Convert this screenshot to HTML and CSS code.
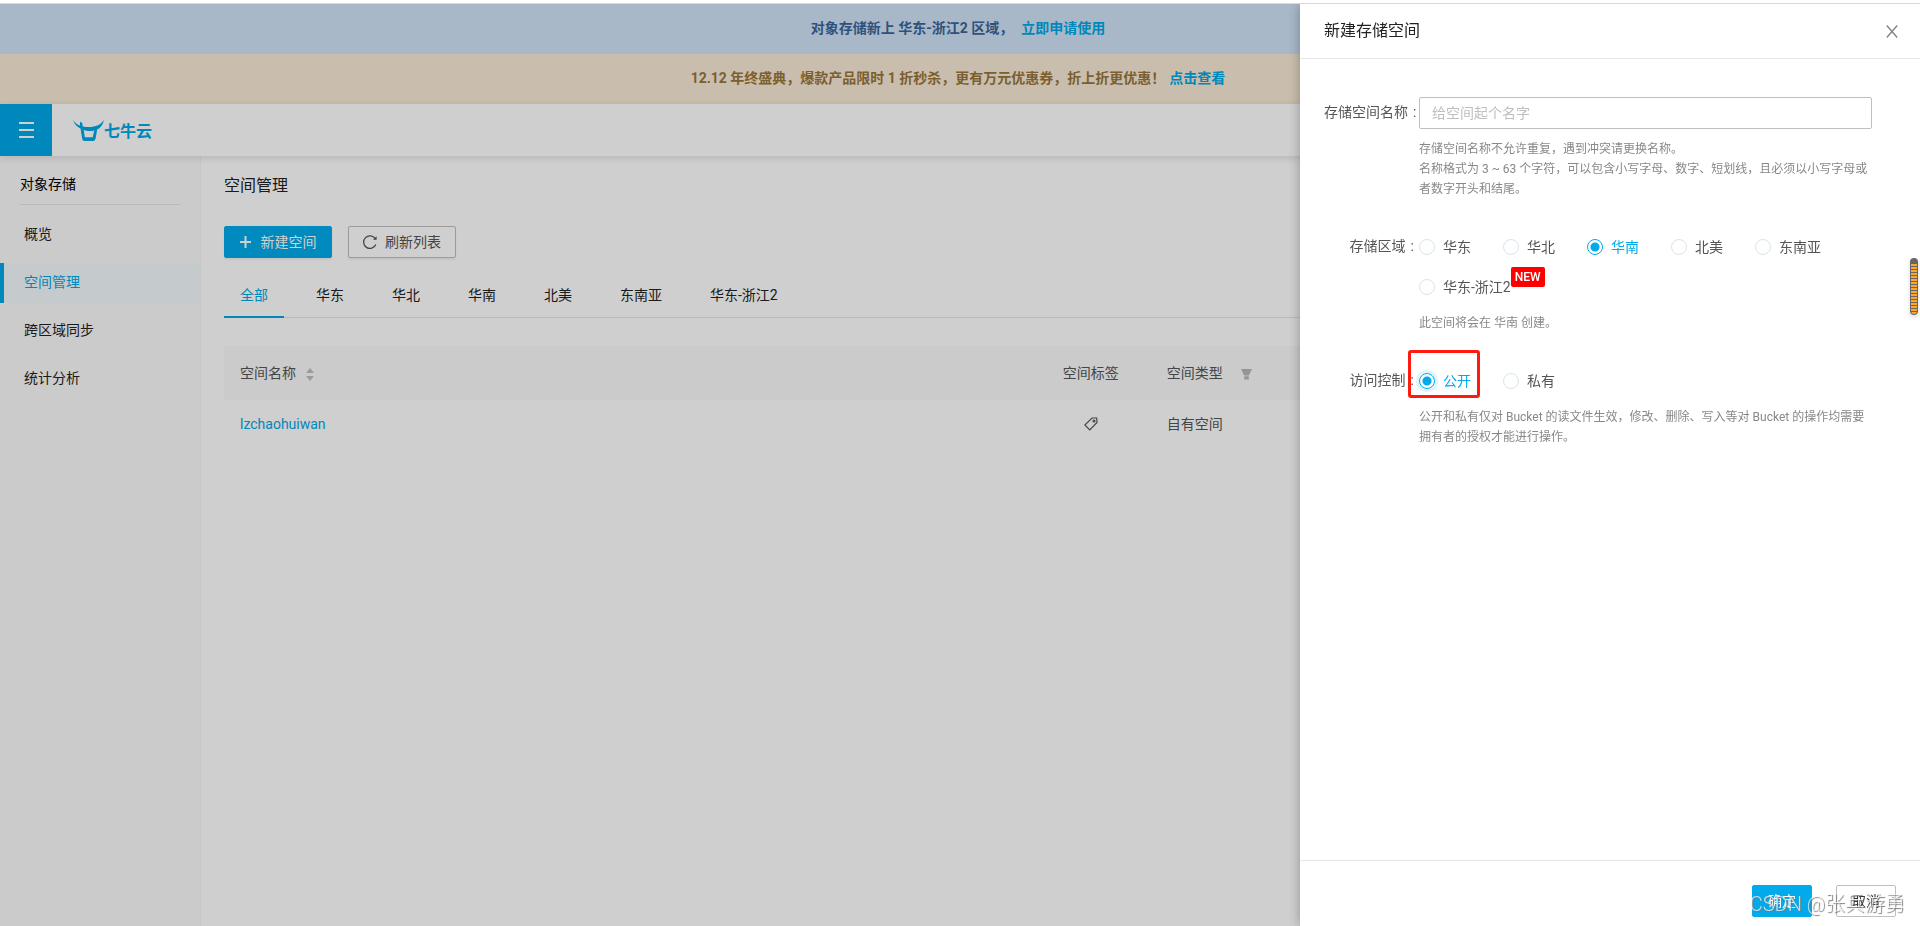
FILE: index.html
```html
<!DOCTYPE html>
<html lang="zh-CN">
<head>
<meta charset="utf-8">
<title>对象存储 - 空间管理</title>
<link rel="stylesheet" href="styles.css">
</head>
<body>
<div class="app">
  <div class="notice notice-info">
    <span>对象存储新上 华东-浙江2 区域，</span>
    <a href="#">立即申请使用</a>
  </div>
  <div class="notice notice-promo">
    <span>12.12 年终盛典，爆款产品限时 1 折秒杀，更有万元优惠券，折上折更优惠！</span>
    <a href="#">点击查看</a>
  </div>
  <header class="header">
    <button class="menu-button" type="button" aria-label="菜单">
      <svg width="15" height="16" viewBox="0 0 15 16"><path d="M0 1h15M0 8h15M0 15h15" stroke="#fff" stroke-width="2"/></svg>
    </button>
    <a class="logo" href="#">
      <svg width="31" height="21" viewBox="0 0 31 21" fill="#00a8e6">
        <path d="M0 0C3 4.500 8 7 15.500 7S28 4.500 31 0C29.500 6 26 10.200 19.500 11C13 11.700 3 9 0 0Z"/>
        <path d="M7 1.500L9.500 3.500V8L7 7Z"/>
        <path d="M7.500 8.500L10.800 10L11.800 17.300H19.800L21.200 10.500L24.200 9.500L22.600 18.500Q22 21 20 21H11.500Q9.500 21 9.100 18.500Z"/>
      </svg>
      <span class="logo-text">七牛云</span>
    </a>
  </header>
  <div class="body">
    <nav class="sidebar">
      <h2 class="sidebar-title">对象存储</h2>
      <a class="nav-item" href="#">概览</a>
      <a class="nav-item active" href="#">空间管理</a>
      <a class="nav-item" href="#">跨区域同步</a>
      <a class="nav-item" href="#">统计分析</a>
    </nav>
    <main class="main">
      <h1 class="page-title">空间管理</h1>
      <div class="toolbar">
        <button class="btn btn-primary" type="button">
          <svg width="11" height="12" viewBox="0 0 11 12"><path d="M5.500 0v12M0 6h11" stroke="currentColor" stroke-width="2"/></svg>
          新建空间
        </button>
        <button class="btn btn-tool" type="button">
          <svg width="14" height="14" viewBox="0 0 14 14" fill="none" stroke="currentColor"><path d="M12.300 3.800A6.300 6.300 0 1 0 12.800 9.500" stroke-width="1.300"/><path d="M13.600 1.200v3.600h-3.600z" fill="currentColor" stroke="none"/></svg>
          刷新列表
        </button>
      </div>
      <div class="tabs" role="tablist">
        <button class="tab selected" type="button" role="tab">全部</button>
        <button class="tab" type="button" role="tab">华东</button>
        <button class="tab" type="button" role="tab">华北</button>
        <button class="tab" type="button" role="tab">华南</button>
        <button class="tab" type="button" role="tab">北美</button>
        <button class="tab" type="button" role="tab">东南亚</button>
        <button class="tab" type="button" role="tab">华东-浙江2</button>
      </div>
      <table class="table">
        <thead>
          <tr>
            <th>空间名称<svg class="sort" width="8" height="13" viewBox="0 0 8 13" fill="#bfbfbf"><path d="M4 0l4 5H0zM4 13l4-5H0z"/></svg></th>
            <th class="col-tag">空间标签</th>
            <th class="col-type">空间类型<svg class="filter" width="11" height="11" viewBox="0 0 11 11" fill="#b8b8b8"><path d="M0 0h11L7.800 6.500H3.200zM3.200 7.200h4.600V10.500H3.200z"/></svg></th>
            <td class="col-rest"></td>
          </tr>
        </thead>
        <tbody>
          <tr>
            <td><a href="#">lzchaohuiwan</a></td>
            <td class="col-tag"><button class="tag-button" type="button" aria-label="标签"><svg width="14" height="14" viewBox="0 0 14 14" fill="none" stroke="currentColor" stroke-width="1.200"><path d="M8 1h4.700l.3 4.500L5.800 13 .8 8z"/><circle cx="10" cy="4" r="1"/></svg></button></td>
            <td>自有空间</td>
            <td></td>
          </tr>
        </tbody>
      </table>
    </main>
  </div>
</div>
<div class="mask"></div>
<aside class="drawer">
  <header class="drawer-header">
    <h2 class="drawer-title">新建存储空间</h2>
    <button class="close" type="button" aria-label="关闭"><svg width="12" height="13" viewBox="0 0 12 13"><path d="M.8.500l10.400 12M11.200.500L.8 12.500" stroke="#888" stroke-width="1.500"/></svg></button>
  </header>
  <form class="form">
    <div class="field">
      <label class="label" for="name">存储空间名称<span class="colon">:</span></label>
      <div class="control">
        <input class="input" id="name" type="text" placeholder="给空间起个名字">
        <p class="hint">存储空间名称不允许重复，遇到冲突请更换名称。<br>名称格式为 3 ~ 63 个字符，可以包含小写字母、数字、短划线，且必须以小写字母或者数字开头和结尾。</p>
      </div>
    </div>
    <div class="field" role="radiogroup" aria-labelledby="region-label">
      <span class="label" id="region-label">存储区域<span class="colon">:</span></span>
      <div class="control">
        <div class="radios">
          <label class="radio"><input type="radio" name="region">华东</label>
          <label class="radio"><input type="radio" name="region">华北</label>
          <label class="radio"><input type="radio" name="region" checked>华南</label>
          <label class="radio"><input type="radio" name="region">北美</label>
          <label class="radio"><input type="radio" name="region">东南亚</label>
          <label class="radio"><input type="radio" name="region"><span class="with-badge">华东-浙江2<span class="badge">NEW</span></span></label>
        </div>
        <p class="hint">此空间将会在 华南 创建。</p>
      </div>
    </div>
    <div class="field" role="radiogroup" aria-labelledby="access-label">
      <span class="label" id="access-label">访问控制<span class="colon">:</span></span>
      <div class="control">
        <div class="radios">
          <label class="radio marked focused"><input type="radio" name="access" checked>公开</label>
          <label class="radio"><input type="radio" name="access">私有</label>
        </div>
        <p class="hint">公开和私有仅对 Bucket 的读文件生效，修改、删除、写入等对 Bucket 的操作均需要拥有者的授权才能进行操作。</p>
      </div>
    </div>
  </form>
  <footer class="drawer-footer">
    <button class="btn btn-primary" type="button">确定</button>
    <button class="btn" type="button">取消</button>
  </footer>
</aside>
<div class="scroll-widget"></div>
<div class="watermark">CSDN @张兵游勇</div>
</body>
</html>
```
FILE: styles.css
```css
* { box-sizing: border-box; }

body {
  margin: 0;
  height: 100vh;
  overflow: hidden;
  background: #fff;
  color: #333;
  font: 14px/20px Roboto, "Noto Sans CJK SC", sans-serif;
}

h1, h2, p { margin: 0; font-weight: 400; }
a { color: #00a8e6; text-decoration: none; }
button, input { font: inherit; color: inherit; }
button { padding: 0; border: 0; background: none; }

.app {
  display: flex;
  flex-direction: column;
  height: 100vh;
  padding-top: 4px;
}

.notice {
  display: flex;
  justify-content: center;
  align-items: center;
  height: 50px;
  padding: 0 4px 2px 0;
  font-weight: 700;
}
.notice-info { gap: 8px; background: #cfe3f7; color: #3a6599; }
.notice-promo { gap: 4px; background: #f8ebd5; color: #98753a; }

.header {
  position: relative;
  display: flex;
  align-items: center;
  height: 52px;
  background: #fff;
  box-shadow: 0 2px 8px rgba(0, 0, 0, .12);
}
.menu-button {
  display: flex;
  align-items: center;
  justify-content: center;
  width: 52px;
  height: 52px;
  background: #00a8e9;
}
.logo {
  display: flex;
  align-items: center;
  margin-left: 21px;
  font-size: 16px;
  font-weight: 700;
}
.logo-text { padding-top: 4px; }

.body { display: flex; flex: 1; }
.sidebar {
  width: 201px;
  padding-top: 12px;
  background: #fafafa;
  border-right: 1px solid #f5f5f5;
}
.sidebar-title {
  margin: 0 20px 10px;
  padding: 6px 0 10px;
  border-bottom: 1px solid #e6e6e6;
  color: #000;
  font-size: 14px;
  line-height: 20px;
}
.nav-item {
  display: block;
  margin-bottom: 8px;
  padding: 9px 24px 11px;
  color: #222;
}
.nav-item.active {
  padding-left: 20px;
  border-left: 4px solid #00a8e9;
  background: #f3f9fd;
  color: #00a8e6;
}

.main { flex: 1; padding: 18px 24px 0 23px; }
.page-title { color: #222; font-size: 16px; line-height: 24px; }
.toolbar { display: flex; gap: 16px; margin-top: 28px; }

.btn {
  display: flex;
  align-items: center;
  justify-content: center;
  gap: 10px;
  min-width: 60px;
  height: 32px;
  border: 1px solid #bfbfbf;
  border-radius: 2px;
}
.btn-primary {
  border-color: #00aaeb;
  background: #00aaeb;
  color: #fff;
}
.toolbar .btn {
  min-width: 108px;
  box-shadow: 0 2px 2px rgba(0, 0, 0, .05);
}
.btn-tool { gap: 8px; color: #555; }

.tabs {
  display: flex;
  gap: 16px;
  height: 60px;
  border-bottom: 1px solid #e6e6e6;
}
.tab {
  height: 60px;
  padding: 16px 16px 0;
  border-bottom: 2px solid transparent;
  color: #222;
}
.tab.selected { border-color: #00a8e9; color: #00a8e6; }

.table {
  width: 100%;
  margin-top: 28px;
  border-collapse: collapse;
  table-layout: fixed;
  color: #555;
}
.table th, .table td {
  padding: 14px 16px;
  text-align: left;
  font-weight: 400;
}
.table thead th, .table thead td { height: 54px; background: #fafafa; }
.table .col-tag { width: 120px; text-align: center; }
.table .col-type { width: 160px; white-space: nowrap; }
.table .col-rest { width: 35%; }
.sort { margin-left: 10px; vertical-align: -3px; }
.filter { margin-left: 18px; vertical-align: -2px; }
.tag-button { display: inline-block; height: 20px; vertical-align: top; }
.tag-button svg { display: block; }

.mask {
  position: fixed;
  inset: 4px 0 0;
  background: rgba(0, 0, 0, .19);
  box-shadow: 0 -1px #d9d9d9;
}

.drawer {
  position: fixed;
  top: 4px;
  right: 0;
  bottom: 0;
  display: flex;
  flex-direction: column;
  width: 620px;
  background: #fff;
  box-shadow: 0 0 12px rgba(0, 0, 0, .3);
  clip-path: inset(0 0 0 -16px);
}
.drawer-header {
  display: flex;
  align-items: center;
  justify-content: space-between;
  height: 55px;
  padding: 0 22px 0 24px;
  border-bottom: 1px solid #e6e6e6;
}
.drawer-title { color: #222; font-size: 16px; line-height: 24px; }
.close { display: flex; }

.form { flex: 1; padding: 38px 48px 0 24px; color: #555; }
.field { display: flex; margin-bottom: 32px; }
.label {
  width: 95px;
  line-height: 30px;
  text-align: right;
  white-space: nowrap;
}
.colon { margin: 0 5px; }
.control { flex: 1; }
.input {
  display: block;
  width: 100%;
  height: 32px;
  padding: 0 12px;
  border: 1px solid #bfbfbf;
  border-radius: 2px;
}
.input::placeholder { color: #bfbfbf; }
.hint {
  margin-top: 10px;
  color: #888;
  font-size: 12px;
  line-height: 20px;
}

.radios { display: flex; flex-wrap: wrap; gap: 8px 32px; }
.radio {
  position: relative;
  display: flex;
  align-items: center;
  gap: 8px;
  height: 32px;
}
.radio input {
  appearance: none;
  width: 16px;
  height: 16px;
  margin: 0;
  border: 1px solid #d9e4e8;
  border-radius: 50%;
  background: #fff;
}
.radio input:checked {
  border-color: #00aaeb;
  background: radial-gradient(circle, #00aaeb 4px, #fff 5px);
}
.radio:has(:checked) { color: #00aaeb; }
.focused input { box-shadow: 0 0 0 3px #e0f4fc; }

/* Red frame around the highlighted option */
.marked::after {
  content: "";
  position: absolute;
  inset: -15px -9px -1px -11px;
  border: 3px solid #ff1a10;
  border-radius: 3px;
}

.with-badge { position: relative; }
.badge {
  position: absolute;
  left: 100%;
  bottom: 10px;
  padding: 0 4px;
  border-radius: 2px;
  background: #f00;
  color: #fff;
  font-size: 12px;
  font-weight: 500;
  line-height: 20px;
}

.drawer-footer {
  display: flex;
  justify-content: flex-end;
  gap: 24px;
  padding: 24px 24px 9px;
  border-top: 1px solid #e6e6e6;
}

.scroll-widget {
  position: fixed;
  top: 258px;
  right: 2px;
  width: 8px;
  height: 57px;
  border: 1px solid #666;
  border-top-width: 6px;
  border-radius: 4px;
  background: repeating-linear-gradient(#ffa726 0 2px, #666 2px 3px);
  box-shadow: 0 2px 4px rgba(0, 0, 0, .15);
}

.watermark {
  position: fixed;
  right: 15px;
  bottom: 8px;
  color: rgba(255, 255, 255, .7);
  font-size: 20px;
  font-weight: 300;
  line-height: 28px;
  text-shadow: 1px 1px 1px #777;
}
```
